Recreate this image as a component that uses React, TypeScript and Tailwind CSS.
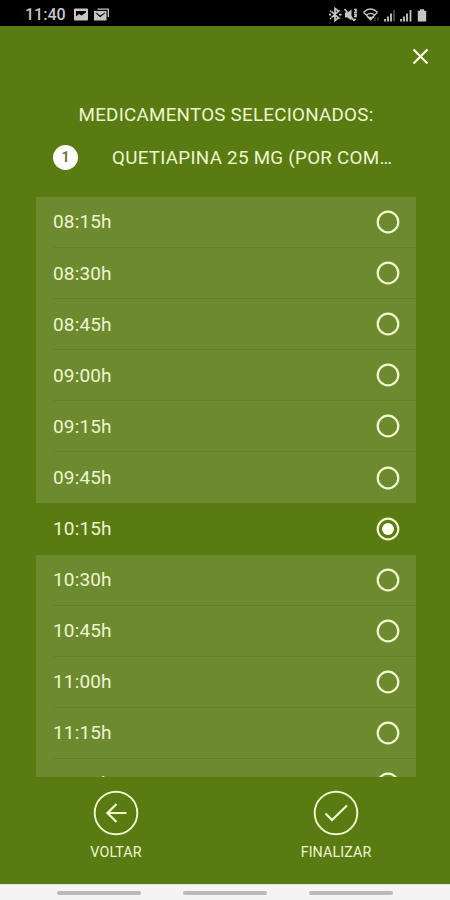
import React from "react";

const times = [
  "08:15h", "08:30h", "08:45h", "09:00h", "09:15h", "09:45h",
  "10:15h", "10:30h", "10:45h", "11:00h", "11:15h", "11:30h",
];
const selected = "10:15h";

function StatusBar() {
  return (
    <header className="flex h-[26px] shrink-0 items-center bg-black pt-[3px] pr-[22px] pl-[25px] text-[#c6c6c6]">
      <span className="w-[49px] text-[16px] leading-5 font-medium">11:40</span>
      <svg width="36" height="14" viewBox="0 0 36 14" fill="currentColor">
        <path fillRule="evenodd" d="M1 .5h12a1 1 0 0 1 1 1v10a1 1 0 0 1-1 1H1a1 1 0 0 1-1-1v-10a1 1 0 0 1 1-1zM2 3v5.500l3-2.500 2.500 1.500L12 4.500V3z" />
        <path d="M23.500 .5H35v8.500h-1.300V1.800H23.500z" />
        <path fillRule="evenodd" d="M20 3h12.500v9.500H20zM21.800 5.200l4.400 4 4.800-4v-.9l-4.800 3.300-4.400-3.300z" />
      </svg>
      <svg className="ml-auto" width="100" height="16" viewBox="0 0 100 16" fill="none" stroke="currentColor" strokeWidth="1.700">
        <path d="M3.500 4.500l7 6.500-3.500 2.500v-12l3.500 2.500-7 6.500M1 7.700h2M11 7.700h2.500M2 3.500l1 1M2 12l1-1M12 3.500l-.5.500M12 11.500l-.5-.500" />
        <path d="M17 5.500h2.500l4-3v11l-4-3H17z" fill="currentColor" stroke="none" />
        <path d="M16.500 2l10 12M26 2.500h2v3h-2M26 7.500h2v2h-2M26 12.500h2" />
        <path d="M35.500 5.300q7-6.500 14 0M38 8.500q4.500-4.200 9 0M35.500 5.300l7 7 7-7" strokeWidth="1.300" />
        <path d="M40.500 10.500l2 2 2-2z" fill="currentColor" />
        <path d="M47 11v3M50 10v4" strokeWidth="1" opacity=".45" />
        <path d="M57 12v2.500M60 9.500v5M63 6.500v8" strokeWidth="1.800" />
        <path d="M66 3v11.500" opacity=".4" />
        <path d="M73 12v2.500M76 9.500v5M79 6.500v8M82.500 3v11.500" strokeWidth="1.800" />
        <path d="M89.800 3.800h2.200V2.200h4v1.600h2.200v10.700h-8.400z" fill="currentColor" stroke="none" />
      </svg>
    </header>
  );
}

function Radio({ checked }: { checked: boolean }) {
  return (
    <svg width="24" height="24" viewBox="0 0 24 24" fill="none">
      <circle cx="12" cy="12" r="10.300" stroke="#f1f8cf" strokeWidth="2.200" />
      {checked && <circle cx="12" cy="12" r="6" fill="#fffff0" />}
    </svg>
  );
}

function TimeRow({ time }: { time: string }) {
  const checked = time === selected;
  const beforeSelected = times[times.indexOf(time) + 1] === selected;
  return (
    <li className={`flex h-[51.1px] shrink-0 flex-col ${checked ? "bg-[#5a7a12]" : "bg-[#6e8a2f]"}`}>
      <div className="flex flex-1 items-center justify-between pr-[16px] pl-[17px]">
        <span className="pt-[0.8px] text-[19px] leading-6 tracking-[0.15px]">{time}</span>
        <Radio checked={checked} />
      </div>
      <div
        className={`h-px ${
          beforeSelected ? "bg-[#5a7a12]" : checked ? "bg-transparent" : "ml-[18px] bg-[#63811f]"
        }`}
      />
    </li>
  );
}

function Action({ label, children }: { label: string; children: React.ReactNode }) {
  return (
    <button className="flex w-[220px] flex-col items-center">
      <svg width="46" height="46" viewBox="0 0 46 46" fill="none" stroke="#f1f8cf" strokeWidth="2.200">
        <circle cx="23" cy="23" r="21.300" strokeWidth="1.900" />
        {children}
      </svg>
      <span className="mt-[6px] text-[14.3px] leading-5 tracking-[0.1px]">{label}</span>
    </button>
  );
}

export default function App() {
  return (
    <main className="flex h-[900px] w-[450px] flex-col overflow-hidden bg-[#5a7a12] font-[Roboto,sans-serif] text-[#edf5cf]">
      <StatusBar />
      <div className="flex h-[60px] shrink-0 justify-end pt-[21.5px] pr-[21px]">
        <svg width="17" height="17" viewBox="0 0 17 17" stroke="#fbffe6" strokeWidth="2.200">
          <path d="M1.500 1.500l14 14M15.500 1.500l-14 14" />
        </svg>
      </div>
      <h1 className="mt-[17px] pl-[2px] text-center text-[18.8px] leading-6 tracking-[0.25px] whitespace-nowrap">MEDICAMENTOS SELECIONADOS:</h1>
      <div className="mt-[18px] flex h-[25px] shrink-0 items-center pl-[53px]">
        <span className="flex size-[25px] items-center justify-center rounded-full bg-[#fffffb] text-[14px] font-bold text-[#667642]">1</span>
        <span className="ml-[34px] text-[18.8px] leading-6 tracking-[0.27px] whitespace-nowrap">QUETIAPINA 25 MG (POR COM…</span>
      </div>
      <ul className="mt-[27px] ml-[36px] flex h-[580px] w-[380px] shrink-0 flex-col overflow-hidden">
        {times.map((t) => <TimeRow key={t} time={t} />)}
      </ul>
      <nav className="flex h-[107px] shrink-0 pt-[13px] pl-[6px]">
        <Action label="VOLTAR">
          <path d="M33.500 23H13.500M23.500 14l-9 9 9 9" />
        </Action>
        <Action label="FINALIZAR">
          <path d="M12.500 23.500l6.500 6.500L34 15.500" />
        </Action>
      </nav>
      <footer className="flex flex-1 items-start justify-center gap-[42px] border-t border-[#dfe5c8] bg-[#f4f4f4] pt-[6px]">
        <span className="h-1 w-[84px] rounded-full bg-[#b9b9b9]" />
        <span className="h-1 w-[84px] rounded-full bg-[#b9b9b9]" />
        <span className="h-1 w-[84px] rounded-full bg-[#b9b9b9]" />
      </footer>
    </main>
  );
}
